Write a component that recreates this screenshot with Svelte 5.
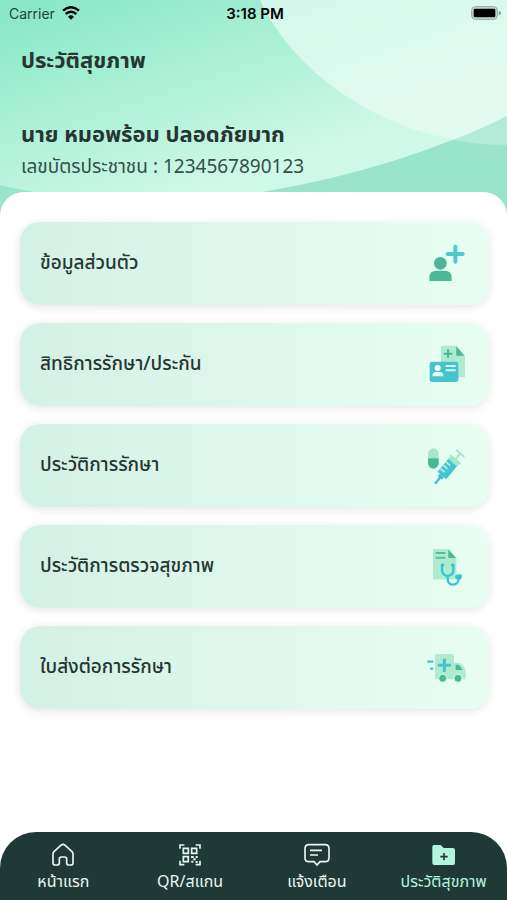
<script>
    const menu = [
        { id: 'personal', label: 'ข้อมูลส่วนตัว' },
        { id: 'rights', label: 'สิทธิการรักษา/ประกัน' },
        { id: 'treatment', label: 'ประวัติการรักษา' },
        { id: 'checkup', label: 'ประวัติการตรวจสุขภาพ' },
        { id: 'referral', label: 'ใบส่งต่อการรักษา' }
    ];

    const tabs = [
        { id: 'home', label: 'หน้าแรก' },
        { id: 'qr', label: 'QR/สแกน' },
        { id: 'notice', label: 'แจ้งเตือน' },
        { id: 'history', label: 'ประวัติสุขภาพ' }
    ];

    let active = $state('history');
</script>

<div class="page">
    <header>
        <svg class="art" viewBox="0 0 507 216" preserveAspectRatio="none" aria-hidden="true">
            <defs>
                <linearGradient id="wave" gradientUnits="userSpaceOnUse" x1="60" y1="0" x2="130" y2="210">
                    <stop offset="0" stop-color="#8ae8c8" />
                    <stop offset="1" stop-color="#cef8e7" />
                </linearGradient>
            </defs>
            <rect width="507" height="216" fill="#9ae4cb" />
            <path d="M0 0H507V116Q400 168 268 191Q130 216 0 185Z" fill="url(#wave)" />
            <path d="M260 0C295 75 390 145 507 145V0Z" fill="#fff" fill-opacity=".26" />
            <path d="M260 0C295 75 376 125 455 139Q482 129 507 116V0Z" fill="#e6fbf4" fill-opacity=".62" />
        </svg>
        <div class="status">
            <div class="carrier">
                <span>Carrier</span>
                <svg width="18" height="14" viewBox="0 0 54 42" aria-hidden="true">
                    <path d="M3 14Q27-7 51 14" fill="none" stroke="#000" stroke-width="7" />
                    <path d="M11 24Q27 10 43 24" fill="none" stroke="#000" stroke-width="7" />
                    <path d="M18 32Q27 24 36 32L27 41Z" />
                </svg>
            </div>
            <time>3:18 PM</time>
            <div class="battery">
                <svg width="30" height="14" viewBox="0 0 90 42" aria-hidden="true">
                    <rect x="2" y="2" width="77" height="38" rx="11" fill="#c3dcd3" stroke="#8fa8a0" stroke-width="3" />
                    <rect x="8" y="8" width="65" height="26" rx="4" />
                    <path d="M83 14Q91 17 91 21T83 28Z" fill="#8fa8a0" />
                </svg>
            </div>
        </div>
        <h1>ประวัติสุขภาพ</h1>
        <p class="name">นาย หมอพร้อม ปลอดภัยมาก</p>
        <p class="citizen">เลขบัตรประชาชน : 1234567890123</p>
    </header>

    <main>
        {#each menu as item}
            <button class="card">
                <span>{item.label}</span>
                <svg width="40" height="40" viewBox="0 0 120 120" aria-hidden="true">
                    {#if item.id === 'personal'}
                        <circle cx="40" cy="58" r="19" fill="#4bb797" />
                        <path d="M7 111V101Q7 80 28 80H53Q74 80 74 101V111Z" fill="#4bb797" />
                        <path d="M85 8V53M62 30H107" stroke="#4bcbd0" stroke-width="12" stroke-linecap="round" />
                    {:else if item.id === 'rights'}
                        <path d="M42 2H88L114 33V97H42Z" fill="#aeebcf" />
                        <path d="M88 4L112 32H88Z" fill="#4bb797" />
                        <path d="M63 13V39M50 26H76" stroke="#4bb797" stroke-width="6" />
                        <rect x="8" y="50" width="86" height="61" rx="8" fill="#47c3cc" />
                        <circle cx="32" cy="69" r="9" fill="#f1fffb" />
                        <path d="M16 94Q16 81 27 81H38Q49 81 49 94Z" fill="#f1fffb" />
                        <path d="M56 63H86M56 76H86" stroke="#d6f8f3" stroke-width="6" />
                    {:else if item.id === 'treatment'}
                        <path d="M3 37V23A16 16 0 0 1 35 23V37Z" fill="#a6e6cb" />
                        <path d="M3 37V52A16 16 0 0 0 35 52V37Z" fill="#4bb797" />
                        <g transform="translate(24 113) rotate(40)">
                            <path d="M0 0V-26" stroke="#43bfd0" stroke-width="7" />
                            <path d="M-8 -22H8V-32H-8Z" fill="#43bfd0" />
                            <path d="M-17 -32H17V-88H-17Z" fill="#43c6d0" />
                            <path d="M-17 -45H0M-17 -58H0M-17 -71H0" stroke="#b8f0dc" stroke-width="5" />
                            <path d="M-17 -82H17V-94H-17Z" fill="#a6e6cb" />
                            <path d="M-21 -95H21" stroke="#a6e6cb" stroke-width="6" />
                            <path d="M0 -95V-118M-16 -118H16" stroke="#a6e6cb" stroke-width="6" />
                        </g>
                    {:else if item.id === 'checkup'}
                        <path d="M18 6H64L88 34V97H18Z" fill="#aeebcf" />
                        <path d="M64 7L87 33H64Z" fill="#4bb797" />
                        <path d="M26 18H55M26 32H55" stroke="#5cbb9e" stroke-width="6" />
                        <g fill="none" stroke="#35c5d3" stroke-width="7">
                            <path d="M52 54H45V69A17 18 0 0 0 79 69V54H72" />
                            <path d="M62 87V96C62 119 95 119 95 94" />
                        </g>
                        <path d="M84 91A11 11 0 0 1 98 82L105 84L104 94A11 11 0 0 1 84 91Z" fill="#35c5d3" />
                    {:else}
                        <path d="M30 18H75Q81 18 81 24V44H94Q108 47 115 65Q118 80 115 94H24V24Q24 18 30 18Z" fill="#aeebcf" />
                        <path d="M86 50H94Q101 54 106 66H86Z" fill="#4bb797" />
                        <path d="M52 32V72M32 52H72" stroke="#47c3cc" stroke-width="9" />
                        <path d="M1 41H19M9 62H19" stroke="#47c3cc" stroke-width="7" />
                        <circle cx="47" cy="91" r="12" fill="#4bb797" stroke="#d8fbe9" stroke-width="3" />
                        <circle cx="93" cy="91" r="12" fill="#4bb797" stroke="#d8fbe9" stroke-width="3" />
                    {/if}
                </svg>
            </button>
        {/each}
    </main>

    <nav>
        {#each tabs as tab}
            <button class:active={active === tab.id} onclick={() => (active = tab.id)}>
                <svg width="26" height="26" viewBox="0 0 78 78" fill="none" stroke="currentColor" stroke-width="5" aria-hidden="true">
                    {#if tab.id === 'home'}
                        <path d="M34 9Q39 5 44 9L66 29Q69 32 69 36V62Q69 69 62 69H56Q50 69 50 63V51Q50 45 44 45H34Q28 45 28 51V63Q28 69 22 69H16Q9 69 9 62V36Q9 32 12 29Z" />
                    {:else if tab.id === 'qr'}
                        <path d="M9 20V9H22M56 9H69V20M69 56V68H56M22 68H9V56" />
                        <path d="M19 19H34V34H19ZM44 19H59V34H44ZM19 44H34V59H19Z" />
                        <path d="M42 45H50M49 52H56M56 45H62M43 59H49M56 60H62" stroke-width="6" />
                    {:else if tab.id === 'notice'}
                        <path d="M15 8H63Q75 8 75 20V47Q75 59 63 59H48L39 69L30 59H15Q3 59 3 47V20Q3 8 15 8Z" />
                        <path d="M18 25H54M18 39H42" />
                    {:else}
                        <path d="M9 9H29L38 18H66Q72 18 72 24V63Q72 69 66 69H10Q4 69 4 63V14Q4 9 9 9Z" fill="currentColor" stroke="none" />
                        <path d="M39 33V55M28 44H50" stroke="#1f3a36" />
                    {/if}
                </svg>
                <span>{tab.label}</span>
            </button>
        {/each}
    </nav>
</div>

<style>
    :global(body) {
        margin: 0;
        background: #fff;
    }
    .page {
        display: flex;
        flex-direction: column;
        min-height: 100vh;
        font-family: "Noto Sans", "Noto Sans Thai", sans-serif;
        color: #263632;
    }
    header {
        position: relative;
        padding-bottom: 33px;
    }
    .art {
        position: absolute;
        inset: 0;
        width: 100%;
        height: 100%;
    }
    .status {
        position: relative;
        display: grid;
        grid-template-columns: 1fr auto 1fr;
        align-items: center;
        height: 26px;
        padding: 0 6px 0 9px;
        font-family: Inter, sans-serif;
        font-size: 14px;
        color: #000;
    }
    .carrier {
        display: flex;
        align-items: center;
        gap: 7px;
        color: #24453a;
    }
    time {
        font-size: 15px;
        font-weight: 600;
    }
    .battery {
        display: flex;
        justify-content: flex-end;
    }
    h1, p {
        position: relative;
        margin: 0;
        padding: 0 21px;
    }
    h1 {
        padding-top: 17px;
        font-size: 22px;
        line-height: 32px;
        font-weight: 700;
    }
    .name {
        padding-top: 42px;
        font-size: 22px;
        line-height: 32px;
        font-weight: 700;
    }
    .citizen {
        font-size: 19px;
        line-height: 34px;
        color: #34504a;
    }
    main {
        position: relative;
        flex: 1;
        display: flex;
        flex-direction: column;
        gap: 18px;
        margin-top: -24px;
        padding: 30px 18px 24px 20px;
        border-radius: 24px 24px 0 0;
        background: #fff;
    }
    button {
        border: 0;
        font-family: inherit;
        cursor: pointer;
    }
    .card {
        display: flex;
        align-items: center;
        justify-content: space-between;
        height: 83px;
        padding: 0 22px 0 20px;
        border-radius: 20px;
        background: linear-gradient(90deg, #d4f1e6, #e8fef3);
        box-shadow: 0 2px 8px rgba(60, 30, 30, .12);
        font-size: 19px;
        font-weight: 500;
        color: inherit;
    }
    nav {
        display: grid;
        grid-template-columns: repeat(4, 1fr);
        height: 68px;
        border-radius: 36px 36px 0 0;
        background: #1f3a36;
    }
    nav button {
        display: flex;
        flex-direction: column;
        align-items: center;
        padding: 10px 0 0;
        background: none;
        font-size: 16px;
        line-height: 26px;
        white-space: nowrap;
        color: #e9f6f2;
    }
    nav button.active {
        color: #b2f5dc;
    }
</style>
